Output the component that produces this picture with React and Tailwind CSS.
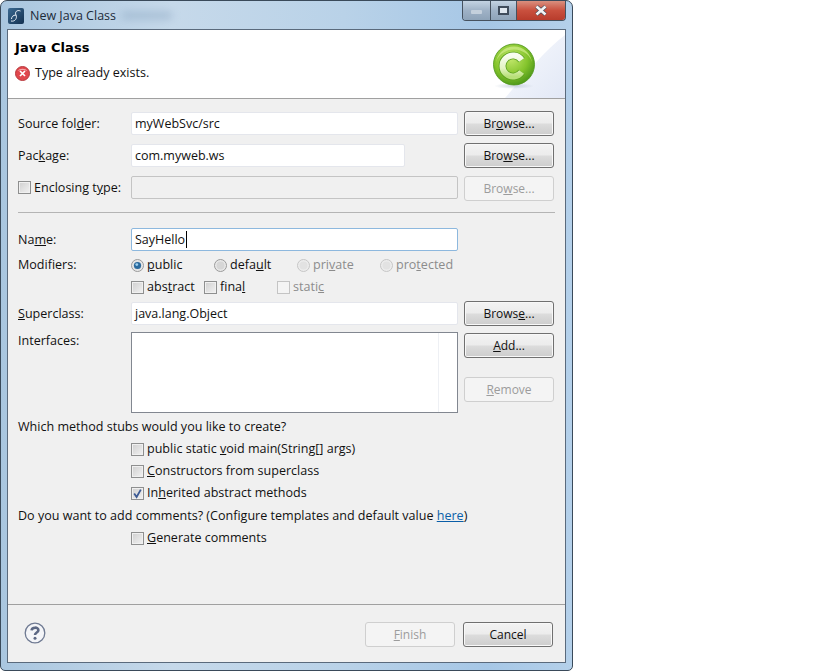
const btnBase =
    'h-[25px] w-[90px] shrink-0 rounded-[3px] text-[12px] flex items-center justify-center';
const btnOn =
    'border border-[#707070] text-[#111111] bg-[linear-gradient(#f3f3f3_0%,#ececec_48%,#dcdcdc_52%,#cdcdcd_100%)] shadow-[inset_0_0_0_1px_#f8f8f8]';
const btnOff = 'border border-[#cfcfcf] text-[#9c9c9c] bg-[#f4f4f4]';

function Btn({ children, disabled, className = '' }) {
    return (
        <div className={`${btnBase} ${disabled ? btnOff : btnOn} ${className}`}>
            <span>{children}</span>
        </div>
    );
}

function Input({ value, width = 'w-[327px]', focused, disabled, caret, className = '' }) {
    let look = 'border-[#e4e6ec] bg-white';
    if (focused) look = 'border-[#8db8de] bg-white';
    if (disabled) look = 'border-[#c4c4c4] bg-[#f0f0f0]';
    return (
        <div className={`h-[23px] ${width} shrink-0 rounded-[2px] border ${look} pl-[3px] text-[12.5px] leading-[21px] text-[#111111] flex items-center ${className}`}>
            {value}
            {caret && <span className="ml-[1px] h-[17px] w-px bg-black" />}
        </div>
    );
}

function Check({ checked, muted }) {
    return (
        <span className={`relative h-[13px] w-[13px] shrink-0 border ${muted ? 'border-[#c4c4c4] bg-[#f4f4f4]' : 'border-[#8e8f8f] bg-[linear-gradient(135deg,#cfcfcf,#f2f2f2)] shadow-[inset_0_0_0_1px_#f0f0f0]'}`}>
            {checked && (
                <svg viewBox="0 0 13 13" className="absolute -left-px -top-px h-[13px] w-[13px]">
                    <path d="M3.2 6.5 L5.6 10 L9.8 2.6" fill="none" stroke="#3c5a94" strokeWidth="1.8" />
                </svg>
            )}
        </span>
    );
}

function Radio({ checked, muted }) {
    return (
        <svg viewBox="0 0 13 13" className="h-[13px] w-[13px] shrink-0">
            <circle cx="6.5" cy="6.5" r="6" fill={muted ? '#ececec' : '#e8e8e8'} stroke={muted ? '#c6c6c6' : '#9a9a9a'} />
            <circle cx="6.5" cy="6.5" r="4" fill={muted ? '#e2e2e2' : '#d6d6d6'} />
            {checked && <circle cx="6.5" cy="6.5" r="3.6" fill="#2a6a9e" />}
            {checked && <circle cx="5.8" cy="5.6" r="1.4" fill="#9fd0ee" />}
        </svg>
    );
}

function Option({ children, checked, muted, radio, className = '' }) {
    return (
        <div className={`flex items-center gap-[3px] ${muted ? 'text-[#8c8c8c]' : ''} ${className}`}>
            {radio ? <Radio checked={checked} muted={muted} /> : <Check checked={checked} muted={muted} />}
            <span>{children}</span>
        </div>
    );
}

function ClassBadge() {
    return (
        <svg viewBox="0 0 44 48" className="h-[48px] w-[44px]">
            <defs>
                <radialGradient id="ball" cx="0.42" cy="0.35" r="0.75">
                    <stop offset="0" stopColor="#c4e86e" />
                    <stop offset="0.55" stopColor="#84c42c" />
                    <stop offset="1" stopColor="#3c8a12" />
                </radialGradient>
                <radialGradient id="shade" cx="0.5" cy="0.5" r="0.5">
                    <stop offset="0" stopColor="#aebccc" stopOpacity="0.6" />
                    <stop offset="1" stopColor="#aebccc" stopOpacity="0" />
                </radialGradient>
                <linearGradient id="letter" x1="0" y1="0" x2="0" y2="1">
                    <stop offset="0" stopColor="#f8fdf0" />
                    <stop offset="0.6" stopColor="#e4f4c4" />
                    <stop offset="1" stopColor="#b8e07a" />
                </linearGradient>
            </defs>
            <ellipse cx="22" cy="43" rx="20" ry="3" fill="url(#shade)" />
            <circle cx="22" cy="21.5" r="20.5" fill="url(#ball)" stroke="#4c9418" strokeWidth="0.8" />
            <path d="M4 21.5 A18 18 0 0 1 40 21.5 A18 15 0 0 0 4 21.5" fill="#d2ee8c" opacity="0.7" />
            <path d="M29.6 17 A10.5 10.5 0 1 0 29.6 29" fill="none" stroke="#5aa01e" strokeWidth="7.6" />
            <path d="M29.6 17 A10.5 10.5 0 1 0 29.6 29" fill="none" stroke="url(#letter)" strokeWidth="6" />
        </svg>
    );
}

function ErrorIcon() {
    return (
        <svg viewBox="0 0 15 15" className="h-[15px] w-[15px] shrink-0">
            <circle cx="7.5" cy="7.5" r="7" fill="#e0474c" stroke="#b83a3e" />
            <path d="M2.5 5 A5.5 4 0 0 1 12.5 5 A9 6 0 0 0 2.5 5" fill="#f5a9ab" />
            <path d="M5 5 L10 10 M10 5 L5 10" stroke="#fff" strokeWidth="1.7" />
        </svg>
    );
}

function HelpIcon() {
    return (
        <svg viewBox="0 0 22 22" className="h-[22px] w-[22px]">
            <circle cx="11" cy="11" r="9.8" fill="#f4f5f8" stroke="#6f7a92" strokeWidth="1.3" />
            <path d="M7.6 8.4 C7.8 4.8 14.4 4.8 14.4 8.2 C14.4 10.6 11 10.4 11 13" fill="none" stroke="#5c6884" strokeWidth="2.6" />
            <circle cx="11" cy="16.2" r="1.5" fill="#5c6884" />
        </svg>
    );
}

function AppLogo() {
    return (
        <div className="flex h-4 w-4 items-center justify-center rounded-[2px] bg-[linear-gradient(135deg,#3b6a92,#13304f)]">
            <svg viewBox="0 0 16 16" className="h-4 w-4">
                <path d="M12.5 3 C9 1.5 6.5 4 8 7 C9.5 10 7 14 3 13 M8 7 C5 7 3.5 9 3.5 11" fill="none" stroke="#e8f0f8" strokeWidth="1" />
            </svg>
        </div>
    );
}

function FormRow({ label, children, button, className = '' }) {
    return (
        <div className={`flex items-start ${className}`}>
            <div className="w-[113px] shrink-0 leading-[25px]">{label}</div>
            <div className="w-[333px] shrink-0">{children}</div>
            {button}
        </div>
    );
}

export default function App() {
    return (
        <div className="h-[671px] w-[819px] bg-white text-[12.55px] text-[#111111] [font-family:'Open_Sans',sans-serif]">
            <div className="flex h-[671px] w-[573px] flex-col rounded-t-[7px] rounded-b-[5px] border border-[#3a4a5a] bg-[linear-gradient(90deg,#a9c6df_0%,#c6d9ea_30%,#b9d2e8_60%,#a6c7e6_85%,#b4d0ea_100%)] px-[6px] pb-[7px]">
                {/* Title bar */}
                <div className="relative flex h-[28px] shrink-0 items-start justify-between">
                    <div className="absolute left-[115px] top-[11px] h-[7px] w-[50px] bg-[#8fa9c4] opacity-60 blur-[4px]" />
                    <div className="relative flex items-center gap-[6px] pl-[1px] pt-[6px] text-[12.5px] text-[#1c2a38]">
                        <AppLogo />
                        <span>New Java Class</span>
                    </div>
                    <div className="relative flex h-[20px] overflow-hidden rounded-b-[4px] border border-t-0 border-[#46525f]">
                        <div className="flex w-[28px] items-center justify-center border-r border-[#46525f] bg-[linear-gradient(#c3d3e2,#9fb2c6_50%,#8ea3b8)]">
                            <span className="mt-[3px] h-[4px] w-[11px] rounded-[1px] bg-[#c4d0dc]" />
                        </div>
                        <div className="flex w-[26px] items-center justify-center border-r border-[#46525f] bg-[linear-gradient(#c3d3e2,#9fb2c6_50%,#8ea3b8)]">
                            <span className="h-[9px] w-[11px] border-[2px] border-[#3f4c5c] bg-[#dfe7ef]" />
                        </div>
                        <div className="flex w-[48px] items-center justify-center bg-[linear-gradient(#d9907f,#c9503e_50%,#b83c2c)]">
                            <svg viewBox="0 0 14 11" className="h-[11px] w-[14px]">
                                <path d="M2.5 1.5 L11.5 9.5 M11.5 1.5 L2.5 9.5" stroke="#3f4c5c" strokeWidth="3.8" />
                                <path d="M2.5 1.5 L11.5 9.5 M11.5 1.5 L2.5 9.5" stroke="#f4f4f4" strokeWidth="2.6" />
                            </svg>
                        </div>
                    </div>
                </div>

                {/* Dialog client area */}
                <div className="flex min-h-0 flex-1 flex-col border border-[#5a6a7c] bg-[#f0f0f0]">
                    <div className="relative flex h-[69px] shrink-0 items-start justify-between overflow-hidden border-b border-[#a0a0a0] bg-white">
                        <svg viewBox="0 0 70 68" className="absolute right-0 top-0 h-[68px] w-[70px]" preserveAspectRatio="none">
                            <defs>
                                <linearGradient id="wedge" x1="0" y1="0" x2="1" y2="1">
                                    <stop offset="0" stopColor="#f8fafd" />
                                    <stop offset="1" stopColor="#e2e8f6" />
                                </linearGradient>
                            </defs>
                            <path d="M10 68 C30 45 50 20 70 5 L70 68 Z" fill="url(#wedge)" />
                        </svg>
                        <div className="relative pl-[7px]">
                            <div className="pt-[9px] text-[13px] font-bold leading-[18px] text-black [font-family:'DejaVu_Sans',sans-serif] tracking-[0.1px]">
                                Java Class
                            </div>
                            <div className="mt-[7px] flex items-center gap-[5px]">
                                <ErrorIcon />
                                <span>Type already exists.</span>
                            </div>
                        </div>
                        <div className="relative mr-[29px] mt-[13px]">
                            <ClassBadge />
                        </div>
                    </div>

                    {/* Form */}
                    <div className="flex flex-1 flex-col pl-[10px] pr-[11px] pt-[12px]">
                        <FormRow label={<span>Source fol<u>d</u>er:</span>} button={<Btn>Br<u>o</u>wse...</Btn>}>
                            <Input value="myWebSvc/src" className="mt-px" />
                        </FormRow>
                        <FormRow label={<span>Pac<u>k</u>age:</span>} button={<Btn>Bro<u>w</u>se...</Btn>} className="mt-[7px]">
                            <Input value="com.myweb.ws" width="w-[274px]" className="mt-px" />
                        </FormRow>
                        <FormRow
                            label={<Option className="h-[23px]"><span>Enclosing t<u>y</u>pe:</span></Option>}
                            button={<Btn disabled>Bro<u>w</u>se...</Btn>}
                            className="mt-[8px]"
                        >
                            <Input disabled />
                        </FormRow>
                        <div className="mt-[11px] h-px w-[537px] bg-[#b4b4b4]" />

                        <FormRow label={<span className="block -mt-px">Na<u>m</u>e:</span>} className="mt-[15px]">
                            <Input value="SayHello" focused caret />
                        </FormRow>
                        <div className="mt-[4px] flex h-[18px] items-center">
                            <div className="w-[113px] shrink-0">Modifiers:</div>
                            <Option radio checked className="w-[83px]"><u>p</u>ublic</Option>
                            <Option radio className="w-[83px]">defa<u>u</u>lt</Option>
                            <Option radio muted className="w-[83px]">pri<u>v</u>ate</Option>
                            <Option radio muted>pro<u>t</u>ected</Option>
                        </div>
                        <div className="mt-[4px] flex h-[18px] items-center pl-[113px]">
                            <Option className="w-[73px]">abs<u>t</u>ract</Option>
                            <Option className="w-[73px]">fina<u>l</u></Option>
                            <Option muted>stati<u>c</u></Option>
                        </div>
                        <FormRow label={<span><u>S</u>uperclass:</span>} button={<Btn>Brows<u>e</u>...</Btn>} className="mt-[5px]">
                            <Input value="java.lang.Object" className="mt-px" />
                        </FormRow>

                        <div className="mt-[6px] flex items-start">
                            <div className="w-[113px] shrink-0 leading-[18px]">Interfaces:</div>
                            <div className="flex h-[81px] w-[327px] shrink-0 justify-end border border-[#828790] bg-white">
                                <div className="w-[19px] border-l border-[#eef0f4]" />
                            </div>
                            <div className="ml-[6px] flex flex-col pt-[1px]">
                                <Btn><u>A</u>dd...</Btn>
                                <Btn disabled className="mt-[19px]"><u>R</u>emove</Btn>
                            </div>
                        </div>

                        <div className="mt-[5px] leading-[18px]">Which method stubs would you like to create?</div>
                        <div className="flex flex-col gap-[4px] pl-[113px] pt-[4px] leading-[18px]">
                            <Option>public static <u>v</u>oid main(String[] args)</Option>
                            <Option><u>C</u>onstructors from superclass</Option>
                            <Option checked>In<u>h</u>erited abstract methods</Option>
                        </div>
                        <div className="mt-[5px] leading-[18px]">
                            Do you want to add comments? (Configure templates and default value <u className="text-[#0a5ea8]">here</u>)
                        </div>
                        <div className="pl-[113px] pt-[4px] leading-[18px]">
                            <Option><u>G</u>enerate comments</Option>
                        </div>
                    </div>

                    {/* Footer */}
                    <div className="flex h-[58px] shrink-0 items-start justify-between border-t border-[#a0a0a0] pl-[16px] pr-[12px]">
                        <div className="pt-[17px]">
                            <HelpIcon />
                        </div>
                        <div className="flex gap-[8px] pt-[17px]">
                            <Btn disabled><u>F</u>inish</Btn>
                            <Btn>Cancel</Btn>
                        </div>
                    </div>
                </div>
            </div>
        </div>
    );
}
